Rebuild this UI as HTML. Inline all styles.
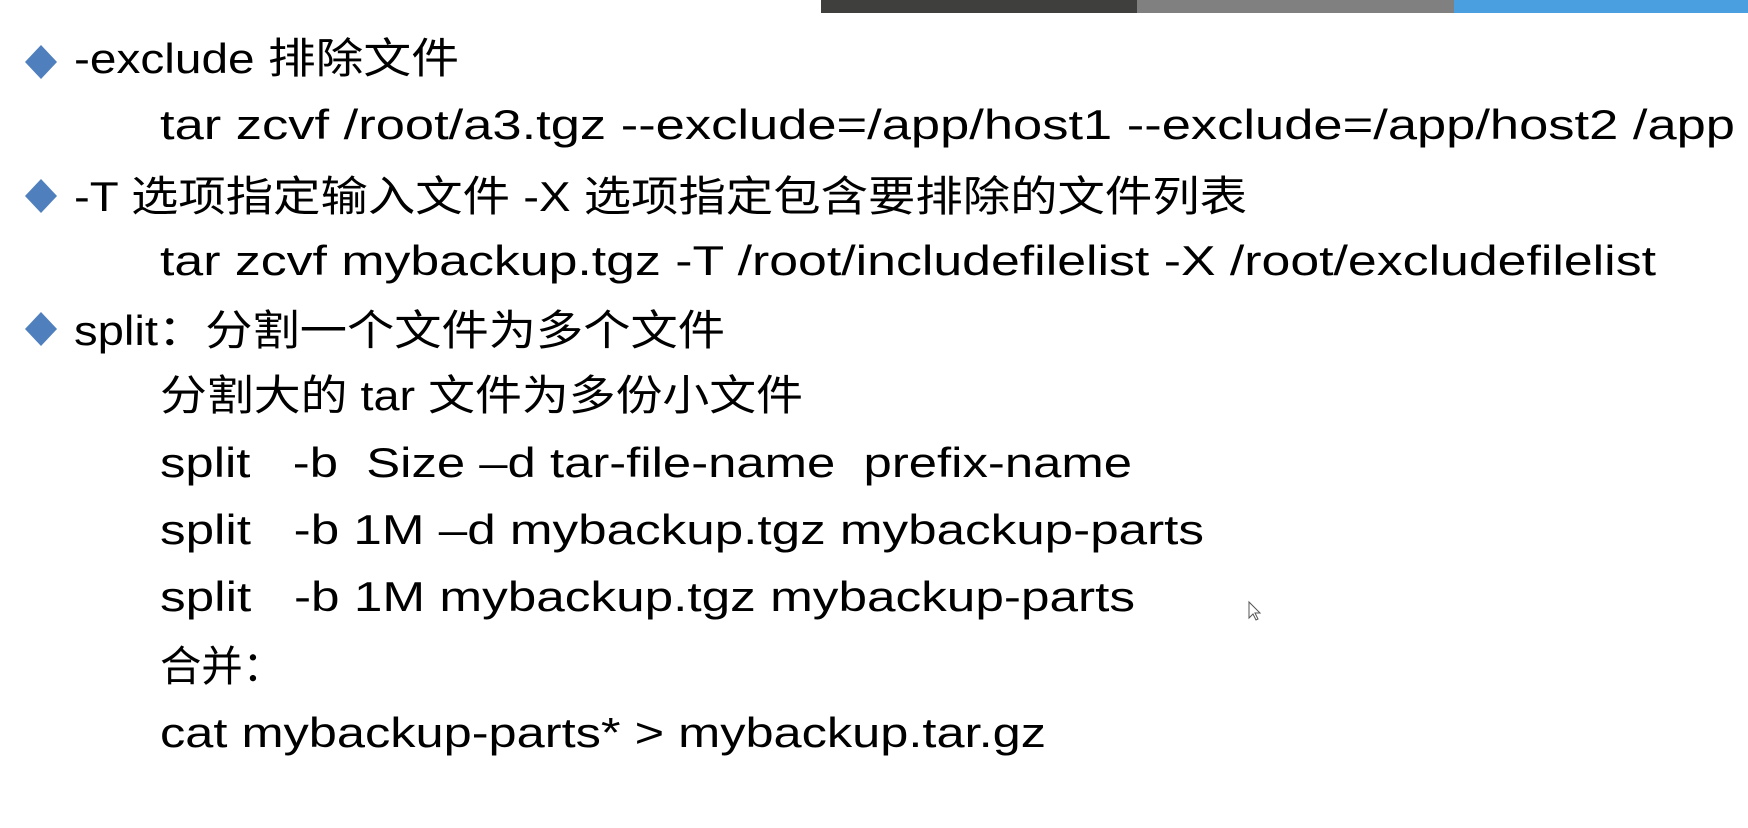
<!DOCTYPE html>
<html><head><meta charset="utf-8"><style>
html,body{margin:0;padding:0;background:#fff;width:1748px;height:828px;overflow:hidden}
svg{display:block}
text{font-family:"Liberation Sans","Noto Sans CJK SC",sans-serif;font-size:42px;fill:#000}
</style></head><body>
<svg width="1748" height="828" viewBox="0 0 1748 828">
<rect x="821" y="0" width="316" height="13" fill="#3f3f3d"/>
<rect x="1137" y="0" width="317" height="13" fill="#808080"/>
<rect x="1454" y="0" width="294" height="13" fill="#4a9fe0"/>
<g fill="#4f7fbd">
<polygon points="41,45 57,62 41,79 25,62"/>
<polygon points="41,179 57,196 41,213 25,196"/>
<polygon points="41,312 57,329 41,346 25,329"/>
</g>
<text x="74" y="73" textLength="385" lengthAdjust="spacingAndGlyphs">-exclude 排除文件</text>
<text x="160" y="139" textLength="1575" lengthAdjust="spacingAndGlyphs">tar zcvf /root/a3.tgz --exclude=/app/host1 --exclude=/app/host2 /app</text>
<text x="74" y="211" textLength="1173" lengthAdjust="spacingAndGlyphs">-T 选项指定输入文件  -X 选项指定包含要排除的文件列表</text>
<text x="160" y="275" textLength="1496" lengthAdjust="spacingAndGlyphs">tar zcvf mybackup.tgz -T /root/includefilelist -X /root/excludefilelist</text>
<text x="74" y="345" textLength="651" lengthAdjust="spacingAndGlyphs">split：分割一个文件为多个文件</text>
<text x="160" y="410" textLength="643" lengthAdjust="spacingAndGlyphs">分割大的 tar 文件为多份小文件</text>
<text x="160" y="477" textLength="972" lengthAdjust="spacingAndGlyphs" xml:space="preserve">split   -b  Size –d tar-file-name  prefix-name</text>
<text x="160" y="544" textLength="1044" lengthAdjust="spacingAndGlyphs" xml:space="preserve">split   -b 1M –d mybackup.tgz mybackup-parts</text>
<text x="160" y="611" textLength="975" lengthAdjust="spacingAndGlyphs" xml:space="preserve">split   -b 1M mybackup.tgz mybackup-parts</text>
<text x="160" y="681" textLength="124" lengthAdjust="spacingAndGlyphs">合并：</text>
<text x="160" y="747" textLength="886" lengthAdjust="spacingAndGlyphs">cat mybackup-parts* &gt; mybackup.tar.gz</text>
<path d="M1249,602 L1249,618 L1253,614 L1256,620 L1258,619 L1255,613 L1260,613 Z" fill="#fff" stroke="#555" stroke-width="1"/>
</svg>
</body></html>
